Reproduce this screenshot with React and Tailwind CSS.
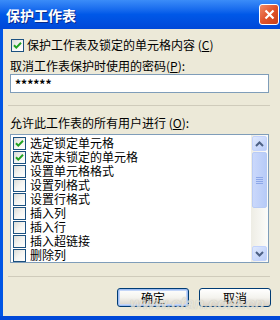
import React from "react";

const font = { fontFamily: '"Noto Sans CJK SC", "Noto Sans", sans-serif' };

const items = [
  { label: "选定锁定单元格", checked: true },
  { label: "选定未锁定的单元格", checked: true },
  { label: "设置单元格格式", checked: false },
  { label: "设置列格式", checked: false },
  { label: "设置行格式", checked: false },
  { label: "插入列", checked: false },
  { label: "插入行", checked: false },
  { label: "插入超链接", checked: false },
  { label: "删除列", checked: false },
];

function CheckBox({ checked }) {
  return (
    <div className="w-[13px] h-[13px] shrink-0 border border-[#1c5180] bg-gradient-to-br from-[#dcdcd7] via-[#f4f4f1] to-white flex items-center justify-center">
      {checked && (
        <svg width="9" height="9" viewBox="0 0 9 9">
          <path d="M1 4.2 L3.3 6.6 L8 1.8" fill="none" stroke="#21a121" strokeWidth="2" />
        </svg>
      )}
    </div>
  );
}

function XpButton({ children, primary }) {
  return (
    <div
      className={
        "w-[72px] h-[19px] rounded-[3px] border border-[#003c74] bg-gradient-to-b from-white via-[#f4f3ee] to-[#d6d0c5] flex items-center justify-center text-[12px] leading-[12px] text-black " +
        (primary ? "shadow-[inset_0_0_0_1px_#9cbcf2,inset_0_0_0_2px_#c4d6f8]" : "")
      }
    >
      {children}
    </div>
  );
}

function ScrollArrow({ down }) {
  return (
    <div className="w-[15px] h-[15px] rounded-[2px] border border-[#c3d3fd] bg-gradient-to-br from-[#e0e9fd] to-[#bacdf9] flex items-center justify-center">
      <svg width="9" height="6" viewBox="0 0 9 6">
        <path
          d={down ? "M1 1 L4.5 4.5 L8 1" : "M1 5 L4.5 1.5 L8 5"}
          fill="none"
          stroke="#4d6185"
          strokeWidth="2"
        />
      </svg>
    </div>
  );
}

export default function App() {
  return (
    <div className="w-[280px] h-[320px] flex flex-col bg-[#ece9d8] overflow-hidden relative" style={font}>
      {/* Title bar */}
      <div className="h-[29px] shrink-0 flex items-center justify-between pl-[6px] pr-[1px] bg-gradient-to-b from-[#3b8cf8] via-[#0058e8] to-[#0048d8]">
        <span className="text-white text-[14px] font-bold leading-none [text-shadow:1px_1px_0_#0a2a8a]">
          保护工作表
        </span>
        <div className="w-[20px] h-[21px] rounded-[3px] border border-white bg-gradient-to-br from-[#f08a66] via-[#e0522a] to-[#c8401a] flex items-center justify-center">
          <svg width="11" height="11" viewBox="0 0 11 11">
            <path d="M1.5 1.5 L9.5 9.5 M9.5 1.5 L1.5 9.5" stroke="white" strokeWidth="2.2" />
          </svg>
        </div>
      </div>

      {/* Body */}
      <div className="flex-1 flex">
        <div className="w-[3px] bg-[#0055e5] shrink-0" />
        <div className="flex-1 flex flex-col pl-[7px] pr-[11px] text-[12px] text-black">
          <div className="mt-[9px] h-[14px] flex items-center gap-[3px] pl-[1px]">
            <CheckBox checked />
            <span className="leading-[12px]">保护工作表及锁定的单元格内容 (<span className="underline">C</span>)</span>
          </div>

          <div className="mt-[7px] h-[14px] flex items-center">
            <span className="leading-[12px]">
              取消工作表保护时使用的密码(<span className="underline">P</span>):
            </span>
          </div>

          <div className="mt-[1px] h-[19px] border border-[#7f9db9] bg-white flex items-center pl-[4px]">
            <span className="text-[12px] font-bold leading-[12px]">******</span>
          </div>

          <div className="mt-[12px] -ml-[2px] -mr-[1px] border-t border-[#cfcbbb]" />

          <div className="mt-[10px] h-[14px] flex items-center">
            <span className="leading-[12px]">
              允许此工作表的所有用户进行 (<span className="underline">O</span>):
            </span>
          </div>

          <div className="mt-[4px] h-[129px] border border-[#7f9db9] bg-white flex">
            <div className="flex-1 flex flex-col pt-[1px] pl-[2px] overflow-hidden">
              {items.map((it) => (
                <div key={it.label} className="h-[14px] shrink-0 flex items-center gap-[4px]">
                  <CheckBox checked={it.checked} />
                  <span className="leading-[12px] whitespace-nowrap">{it.label}</span>
                </div>
              ))}
            </div>
            <div className="w-[17px] shrink-0 bg-gradient-to-r from-[#eeede5] to-[#fcfcfa] flex flex-col items-center py-[1px]">
              <ScrollArrow />
              <div className="w-[15px] h-[56px] mt-[1px] rounded-[2px] border border-[#b8cbf5] bg-gradient-to-r from-[#cad8fb] to-[#b7cbf8] flex flex-col items-center justify-center gap-[1px]">
                {[0, 1, 2, 3].map((i) => (
                  <div key={i} className="w-[7px] h-[1px] bg-[#8ca7e8]" />
                ))}
              </div>
              <div className="flex-1" />
              <ScrollArrow down />
            </div>
          </div>

          <div className="mt-[13px] -ml-[2px] -mr-[1px] border-t border-[#cfcbbb]" />

          <div className="mt-[11px] flex justify-end gap-[10px] -mr-[2px]">
            <XpButton primary>确定</XpButton>
            <XpButton>取消</XpButton>
          </div>
        </div>
      </div>

      {/* Bottom frame */}
      <div className="h-[4px] shrink-0 bg-[#0048d8]" />

      {/* watermark */}
      <div
        className="absolute left-[130px] top-[296px] text-[16px] leading-[16px] font-bold italic text-[#e4e2d8] opacity-80 pointer-events-none [text-shadow:0_0_1px_#bdbab0]"
        style={{ fontFamily: '"Liberation Sans", sans-serif' }}
      >
        www.cfan.com.cn
      </div>
    </div>
  );
}
